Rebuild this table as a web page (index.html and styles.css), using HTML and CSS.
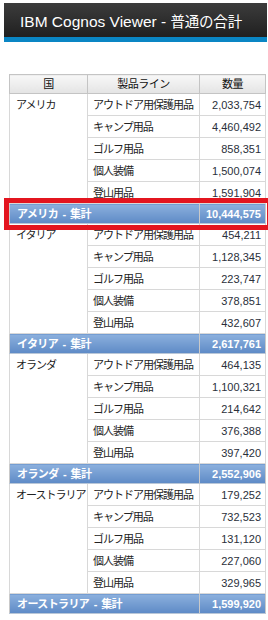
FILE: index.html
```html
<!DOCTYPE html>
<html lang="ja">
<head>
<meta charset="utf-8">
<link rel="stylesheet" href="styles.css">
</head>
<body>
<div class="titlebar">
  <h1 class="title">IBM Cognos Viewer - <span class="jp">普通の合計</span></h1>
</div>
<div class="report">
<table class="crosstab">
  <thead>
    <tr><th class="c1">国</th><th class="c2">製品ライン</th><th class="c3">数量</th></tr>
  </thead>
  <tbody>
    <tr class="first"><td class="country" rowspan="5">アメリカ</td><td class="line">アウトドア用保護用品</td><td class="num">2,033,754</td></tr>
    <tr><td class="line">キャンプ用品</td><td class="num">4,460,492</td></tr>
    <tr><td class="line">ゴルフ用品</td><td class="num">858,351</td></tr>
    <tr><td class="line">個人装備</td><td class="num">1,500,074</td></tr>
    <tr><td class="line">登山用品</td><td class="num">1,591,904</td></tr>
    <tr class="total hl"><td class="tlabel" colspan="2">アメリカ - 集計</td><td class="tnum">10,444,575</td></tr>

    <tr class="first"><td class="country" rowspan="5">イタリア</td><td class="line">アウトドア用保護用品</td><td class="num">454,211</td></tr>
    <tr><td class="line">キャンプ用品</td><td class="num">1,128,345</td></tr>
    <tr><td class="line">ゴルフ用品</td><td class="num">223,747</td></tr>
    <tr><td class="line">個人装備</td><td class="num">378,851</td></tr>
    <tr><td class="line">登山用品</td><td class="num">432,607</td></tr>
    <tr class="total"><td class="tlabel" colspan="2">イタリア - 集計</td><td class="tnum">2,617,761</td></tr>

    <tr class="first"><td class="country" rowspan="5">オランダ</td><td class="line">アウトドア用保護用品</td><td class="num">464,135</td></tr>
    <tr><td class="line">キャンプ用品</td><td class="num">1,100,321</td></tr>
    <tr><td class="line">ゴルフ用品</td><td class="num">214,642</td></tr>
    <tr><td class="line">個人装備</td><td class="num">376,388</td></tr>
    <tr><td class="line">登山用品</td><td class="num">397,420</td></tr>
    <tr class="total"><td class="tlabel" colspan="2">オランダ - 集計</td><td class="tnum">2,552,906</td></tr>

    <tr class="first"><td class="country" rowspan="5">オーストラリア</td><td class="line">アウトドア用保護用品</td><td class="num">179,252</td></tr>
    <tr><td class="line">キャンプ用品</td><td class="num">732,523</td></tr>
    <tr><td class="line">ゴルフ用品</td><td class="num">131,120</td></tr>
    <tr><td class="line">個人装備</td><td class="num">227,060</td></tr>
    <tr><td class="line">登山用品</td><td class="num">329,965</td></tr>
    <tr class="total"><td class="tlabel" colspan="2">オーストラリア - 集計</td><td class="tnum">1,599,920</td></tr>
  </tbody>
</table>
</div>
</body>
</html>
```
FILE: styles.css
```css
html, body {
  margin: 0;
  padding: 0;
  background: #ffffff;
}
body {
  padding-top: 3px;
  font-family: "Liberation Sans", "Noto Sans CJK JP", sans-serif;
}
.titlebar {
  margin-left: 4px;
  margin-right: 1px;
  height: 34px;
  background: linear-gradient(#3c3c3c, #202020);
  border-bottom: 5px solid #0a86c4;
  display: flex;
  align-items: center;
  padding-left: 16px;
}
.title {
  margin: 0;
  font-weight: normal;
  font-size: 15.5px;
  color: #ffffff;
  white-space: nowrap;
  font-family: "Liberation Sans", "Noto Sans CJK JP", sans-serif;
}
.title .jp {
  font-size: 14.5px;
  letter-spacing: -0.2px;
}
.report {
  padding: 32px 6px 0 9px;
}
.crosstab {
  border-collapse: collapse;
  width: 253px;
  table-layout: fixed;
  font-size: 11px;
  color: #222;
}
.c1 { width: 77px; }
.c2 { width: 111px; }
.c3 { width: 65px; }
th {
  height: 18px;
  padding: 0;
  font-weight: normal;
  text-align: center;
  background: linear-gradient(#f7f7f7, #e4e4e4);
  border: 1px solid #c4c4c4;
  line-height: 18px;
  color: #111;
  letter-spacing: -0.5px;
}
td {
  padding: 0;
  border: 1px solid #d8d8d8;
  height: 21px;
  line-height: 14px;
  white-space: nowrap;
}
.country {
  vertical-align: top;
  padding: 4px 0 0 6px;
  letter-spacing: -1px;
}
.line {
  padding-left: 5px;
  vertical-align: middle;
  letter-spacing: -1px;
}
.num {
  text-align: right;
  padding-right: 4px;
  color: #2a2f3a;
}
.total td {
  height: 19px;
  background: linear-gradient(#8cb0dd, #5d8ac6);
  color: #ffffff;
  font-weight: bold;
  border: 1px solid #b9c7d8;
  border-left-color: #c9c9c9;
  border-right-color: #c9c9c9;
}
.tlabel {
  padding-left: 7px;
  letter-spacing: -0.6px;
  word-spacing: 2px;
}
.tnum {
  text-align: right;
  padding-right: 4px;
}
.total.hl {
  outline: 5px solid #e3151f;
  outline-offset: 1px;
}
```
